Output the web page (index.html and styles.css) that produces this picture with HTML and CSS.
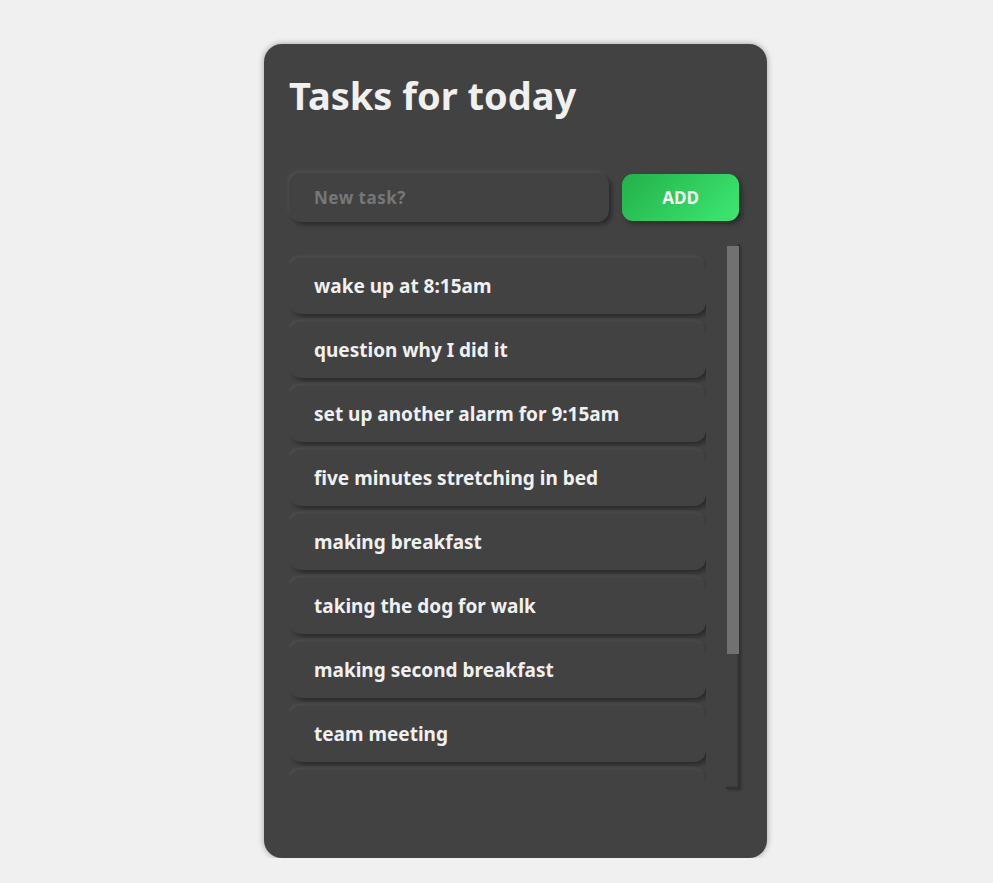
FILE: index.html
```html
<!DOCTYPE html>
<html lang="en">
<head>
<meta charset="utf-8">
<title>Tasks for today</title>
<link rel="stylesheet" href="styles.css">
</head>
<body>
<main class="card">
  <h1 class="title">Tasks for today</h1>
  <form class="add-form">
    <input class="task-input" type="text" placeholder="New task?">
    <button class="add-btn" type="button">ADD</button>
  </form>
  <div class="list-wrap">
    <ul class="task-list">
      <li class="task">wake up at 8:15am</li>
      <li class="task">question why I did it</li>
      <li class="task">set up another alarm for 9:15am</li>
      <li class="task">five minutes stretching in bed</li>
      <li class="task">making breakfast</li>
      <li class="task">taking the dog for walk</li>
      <li class="task">making second breakfast</li>
      <li class="task">team meeting</li>
      <li class="task">lunch break</li>
      <li class="task">afternoon nap</li>
      <li class="task">go to sleep</li>
    </ul>
    <div class="scrollbar"><div class="thumb"></div></div>
  </div>
</main>
</body>
</html>
```

FILE: styles.css
```css
* { box-sizing: border-box; }

body {
  margin: 0;
  background: #f0f0f0;
  font-family: "Noto Sans", "Open Sans", sans-serif;
}

.card {
  width: 503px;
  height: 814px;
  margin: 44px 0 0 264px;
  padding: 25px 27px 0 25px;
  background: #424242;
  border-radius: 18px;
  box-shadow: 0 0 6px rgba(0, 0, 0, 0.35);
  display: flex;
  flex-direction: column;
}

.title {
  margin: -1px 0 0;
  font-size: 38px;
  font-weight: 700;
  line-height: 54px;
  color: #f0f0f0;
}

.add-form {
  display: flex;
  gap: 13px;
  margin-top: 51px;
  align-items: center;
}

.task-input {
  width: 320px;
  height: 49px;
  padding: 0 25px;
  border: none;
  outline: none;
  border-radius: 12px;
  background: #424242;
  color: #f0f0f0;
  font-family: inherit;
  font-size: 17px;
  font-weight: 700;
  box-shadow: -2px -3px 3px rgba(255, 255, 255, 0.05), 3px 3px 4px rgba(0, 0, 0, 0.35);
}

.task-input::placeholder {
  color: #777;
  letter-spacing: 0.5px;
}

.add-btn {
  width: 117px;
  height: 47px;
  border: none;
  border-radius: 11px;
  background: linear-gradient(135deg, #22b14a, #3ee872);
  color: #f4f4f4;
  font-family: inherit;
  font-size: 17px;
  font-weight: 700;
  box-shadow: 3px 3px 5px rgba(0, 0, 0, 0.35);
}

.list-wrap {
  display: flex;
  gap: 20px;
  height: 545px;
  margin-top: 22px;
}

.task-list {
  width: 417px;
  list-style: none;
  margin: 0;
  padding: 14px 0 0;
  overflow: hidden;
  display: flex;
  flex-direction: column;
  gap: 8px;
}

.scrollbar {
  width: 14px;
  padding: 2px 1px 0;
  background: #424242;
  box-shadow: inset -2px -2px 2px rgba(0, 0, 0, 0.3), 2px 2px 2px rgba(0, 0, 0, 0.2);
}

.thumb {
  height: 408px;
  background: #717171;
}

.task {
  flex: none;
  height: 56px;
  padding: 0 25px;
  display: flex;
  align-items: center;
  border-radius: 12px;
  background: #424242;
  color: #f0f0f0;
  font-size: 19px;
  font-weight: 700;
  line-height: 26px;
  box-shadow: -1px -3px 3px rgba(255, 255, 255, 0.05), 3px 3px 4px rgba(0, 0, 0, 0.35);
}

.task:nth-child(n+9) {
  padding-top: 4px;
}
```
